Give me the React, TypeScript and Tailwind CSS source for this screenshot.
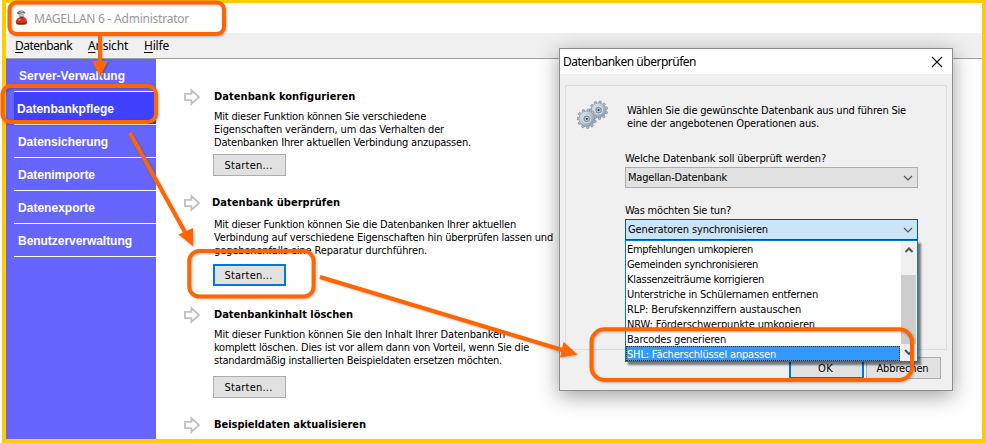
import { useLayoutEffect, useRef, useState } from "react";

const tahoma = "font-['DejaVu_Sans_Condensed','DejaVu_Sans',sans-serif] [font-stretch:condensed]";
const segoe = "font-['Noto_Sans',sans-serif]";

/** One line of text, tracked so that it fills the given width. */
function Line({ text, w, className = "", mnemonic = false }: { text: string; w: number; className?: string; mnemonic?: boolean }) {
  const ref = useRef<HTMLSpanElement>(null);
  const [spacing, setSpacing] = useState(0);
  useLayoutEffect(() => {
    if (ref.current) setSpacing((w - ref.current.getBoundingClientRect().width) / text.length);
  }, [w, text]);
  return (
    <span ref={ref} className={`block w-max whitespace-pre ${className}`} style={{ letterSpacing: `${spacing}px` }}>
      {mnemonic ? (
        <>
          <span className="underline underline-offset-2">{text[0]}</span>
          {text.slice(1)}
        </>
      ) : (
        text
      )}
    </span>
  );
}

const nav = [
  { text: "Server-Verwaltung", w: 106, pad: "pl-[5px]" },
  { text: "Datenbankpflege", w: 97, pad: "pl-[3px]", active: true },
  { text: "Datensicherung", w: 90, pad: "pl-1" },
  { text: "Datenimporte", w: 77, pad: "pl-1" },
  { text: "Datenexporte", w: 77, pad: "pl-1" },
  { text: "Benutzerverwaltung", w: 114, pad: "pl-1" },
];

type Section = {
  title: string;
  titleW: number;
  height: string;
  head: string;
  body: string;
  action: string;
  focused?: boolean;
  lines: [string, number][];
};

const sections: Section[] = [
  {
    title: "Datenbank konfigurieren",
    titleW: 142,
    height: "h-[106px]",
    head: "pl-px",
    body: "pt-[7px]",
    action: "pt-[5px]",
    lines: [
      ["Mit dieser Funktion können Sie verschiedene", 212],
      ["Eigenschaften verändern, um das Verhalten der", 230],
      ["Datenbanken Ihrer aktuellen Verbindung anzupassen.", 257],
    ],
  },
  {
    title: "Datenbank überprüfen",
    titleW: 128,
    height: "h-[112px]",
    head: "-ml-px",
    body: "pt-[9px]",
    action: "pt-[7px]",
    focused: true,
    lines: [
      ["Mit dieser Funktion können Sie die Datenbanken Ihrer aktuellen", 302],
      ["Verbindung auf verschiedene Eigenschaften hin überprüfen lassen und", 339],
      ["gegebenenfalls eine Reparatur durchführen.", 213],
    ],
  },
  {
    title: "Datenbankinhalt löschen",
    titleW: 140,
    height: "h-[110px]",
    head: "pl-px",
    body: "pt-[7px]",
    action: "pt-[9px]",
    lines: [
      ["Mit dieser Funktion können Sie den Inhalt Ihrer Datenbanken", 291],
      ["komplett löschen. Dies ist vor allem dann von Vorteil, wenn Sie die", 315],
      ["standardmäßig installierten Beispieldaten ersetzen möchten.", 288],
    ],
  },
  { title: "Beispieldaten aktualisieren", titleW: 153, height: "h-5", head: "pl-px", body: "pt-0", action: "pt-0", lines: [] },
];

const options: [string, number][] = [
  ["Empfehlungen umkopieren", 126],
  ["Gemeinden synchronisieren", 131],
  ["Klassenzeiträume korrigieren", 137],
  ["Unterstriche in Schülernamen entfernen", 191],
  ["RLP: Berufskennziffern austauschen", 174],
  ["NRW: Förderschwerpunkte umkopieren", 188],
  ["Barcodes generieren", 99],
  ["SHL: Fächerschlüssel anpassen", 149],
];

function ArrowIcon() {
  return (
    <svg width="17" height="18" viewBox="0 0 17 18" fill="none" stroke="#c0c0c0" strokeWidth="1.8">
      <path d="M1 5.9H7.4V2L15 9L7.4 16V12.1H1Z" />
    </svg>
  );
}

function Chevron({ up = false, bold = false }: { up?: boolean; bold?: boolean }) {
  return (
    <svg width="10" height="8" viewBox="0 0 10 8" fill="none" stroke="#555" strokeWidth={bold ? 2 : 1.2}>
      <path d={up ? "M1.5 6L5 2.5L8.5 6" : "M1 2L5 6L9 2"} />
    </svg>
  );
}

function Wizard() {
  return (
    <svg width="13" height="16" viewBox="0 0 13 16">
      <path d="M1 13Q.2 10.5 2.6 8.2L5 7L9.5 7.2Q12.4 9.5 12 13Q7 15.2 1 13Z" fill="#d8321a" />
      <path d="M1 12.6Q6 13.6 12 12.6L11.2 14.2Q6 15.2 1.6 14.2Z" fill="#951f13" />
      <path d="M3 9.4L6 8.6L5 11Z" fill="#ff9169" />
      <circle cx="6.5" cy="5.2" r="2.6" fill="#e0b49c" />
      <path d="M2 3.6Q2.4 .6 6.4 .4Q10 .8 10.4 3.8L7 2.8L3.4 4.4Z" fill="#536b98" />
      <path d="M4.4 2.4Q6 1.2 8.2 2" stroke="#c4cfe8" fill="none" />
      <path d="M4.6 6.8Q7 6 9 6.8L7.6 8.6H5.6Z" fill="#404057" />
    </svg>
  );
}

function Gear({ x, y, r }: { x: number; y: number; r: number }) {
  return (
    <g transform={`translate(${x} ${y})`}>
      {Array.from({ length: 11 }, (_, i) => (
        <rect key={i} x="-1.2" y={-r - 1.9} width="2.4" height="4" rx=".5" fill="#b7c4ce" stroke="#74838f" strokeWidth=".6" transform={`rotate(${(i * 360) / 11 + 10})`} />
      ))}
      <circle r={r} fill="url(#steel)" stroke="#7f8f9c" strokeWidth=".6" />
      <circle r="4" fill="#93a5b4" stroke="#dfe8ee" strokeWidth=".9" />
      <circle r="2.5" fill="#d3dee6" stroke="#5f7180" strokeWidth=".7" />
      <circle r="1.1" fill="#293744" />
    </g>
  );
}

function Gears() {
  return (
    <svg width="32" height="32" viewBox="0 0 32 32">
      <defs>
        <linearGradient id="steel" x1="0" y1="0" x2="1" y2="1">
          <stop offset="0" stopColor="#e6eef4" />
          <stop offset=".5" stopColor="#b4c2cf" />
          <stop offset="1" stopColor="#7890a6" />
        </linearGradient>
      </defs>
      <Gear x={21.6} y={10.2} r={7.3} />
      <Gear x={9.8} y={18.8} r={7.8} />
    </svg>
  );
}

function StartButton({ focused = false }: { focused?: boolean }) {
  return (
    <div className={`flex h-[22px] w-[73px] items-center justify-center bg-[#e1e1e1] pr-0.5 ${focused ? "border-2 border-[#0078d7]" : "border border-[#adadad]"}`}>
      <Line text="Starten..." w={48} />
    </div>
  );
}

function CheckDialog() {
  return (
    <div className="absolute top-12 left-[559px] flex h-[343px] w-[394px] flex-col border border-[#8c8c8c] bg-[#f0f0f0] shadow-[0_5px_20px_rgba(0,0,0,0.38)]">
      <div className="flex h-[25px] items-center justify-between bg-white pr-[9px] pl-[3px]">
        <Line text="Datenbanken überprüfen" w={133} className={`text-[12px] ${segoe}`} />
        <svg width="12" height="12" viewBox="0 0 12 12" stroke="#111" strokeWidth="1.1">
          <path d="M1 1L11 11M11 1L1 11" />
        </svg>
      </div>
      <div className="mx-[5px] mt-[11px] flex h-[265px] border border-[#dcdcdc] pl-[11px]">
        <div className="w-[48px] pt-[14px]">
          <Gears />
        </div>
        <div className="flex flex-col">
          <div className="pt-[18px] pl-[2px]">
            <Line text="Wählen Sie die gewünschte Datenbank aus und führen Sie" w={279} />
            <Line text="eine der angebotenen Operationen aus." w={192} />
          </div>
          <Line text="Welche Datenbank soll überprüft werden?" w={201} className="mt-[22px]" />
          <div className="mt-[2px] flex h-[21px] w-[293px] items-center justify-between border border-[#adadad] bg-[#e1e1e1] pr-1 pl-0.5">
            <Line text="Magellan-Datenbank" w={99} />
            <Chevron />
          </div>
          <Line text="Was möchten Sie tun?" w={106} className="mt-[16px]" />
          <div className="relative mt-[2px] flex h-[21px] w-[293px] items-center justify-between border border-[#005499] bg-[#cce4f7] pr-1 pl-0.5">
            <Line text="Generatoren synchronisieren" w={140} />
            <Chevron />
            <div className="absolute top-5 -left-px z-10 flex h-[122px] w-[293px] border border-[#0078d7] bg-white shadow-[3px_3px_2px_rgba(0,0,0,0.5)]">
              <div className="flex-1">
                {options.map(([text, w], i) => (
                  <div key={text} className={`flex h-[15px] items-end pl-px ${i === 7 ? "bg-[#3399ff] text-white outline-1 -outline-offset-1 outline-dotted outline-[#3c2a10]" : ""}`}>
                    <Line text={text} w={w} />
                  </div>
                ))}
              </div>
              <div className="mr-px ml-px flex w-[15px] flex-col items-center bg-[#f0f0f0]">
                <div className="flex h-[34px] items-start pt-[5px]">
                  <Chevron up bold />
                </div>
                <div className="h-[69px] w-full bg-[#cdcdcd]" />
                <div className="pt-1">
                  <Chevron bold />
                </div>
              </div>
            </div>
          </div>
        </div>
      </div>
      <div className="mt-[7px] flex gap-0.5 pl-[229px]">
        <div className="flex h-[22px] w-[75px] items-center justify-center border-2 border-[#0078d7] bg-[#e1e1e1] pr-0.5">
          <Line text="OK" w={15} />
        </div>
        <div className="flex h-[22px] w-[75px] items-center justify-center border border-[#adadad] bg-[#e1e1e1] pr-0.5">
          <Line text="Abbrechen" w={52} />
        </div>
      </div>
    </div>
  );
}

function Annotations() {
  return (
    <svg className="pointer-events-none absolute inset-0 z-20 drop-shadow-[1px_1px_1px_rgba(0,0,0,0.25)]" width="986" height="443" viewBox="0 0 986 443">
      <g fill="none" stroke="#ff6600" strokeWidth="4">
        <rect x="9.5" y="2.5" width="214.5" height="31.5" rx="7" />
        <rect x="2.5" y="86" width="153.5" height="36" rx="8" />
        <rect x="189.3" y="251" width="124.3" height="45.5" rx="10" />
        <rect x="591.5" y="329.3" width="320.5" height="50.7" rx="13" />
        <path d="M100 35V64M130 133L186 234M320 277L564 350.5" />
      </g>
      <g fill="#ff6600">
        <path d="M92 61H108L100 77Z" />
        <path d="M178.5 234.5L193 228L193.3 246.5Z" />
        <path d="M563.5 342L577.5 354.5L560 357.5Z" />
      </g>
    </svg>
  );
}

export default function App() {
  return (
    <div className={`relative h-[443px] w-[986px] overflow-hidden bg-white pl-0.5 text-[11px] leading-[13px] text-black ${tahoma}`}>
      <div className="flex h-full flex-col border-4 border-t-3 border-[#ffcc00]">
        <div className="flex h-[30px] items-center gap-[6px] bg-white pl-[9px]">
          <Wizard />
          <Line text="MAGELLAN 6 - Administrator" w={155} className={`text-[12px] text-[#999] ${segoe}`} />
        </div>
        <div className={`flex h-[26px] items-center gap-4 border-b border-[#a0a0a0] bg-[#f0f0f0] pl-[9px] text-[12px] ${segoe}`}>
          <Line text="Datenbank" w={57} mnemonic />
          <Line text="Ansicht" w={40} mnemonic />
          <Line text="Hilfe" w={25} mnemonic />
        </div>
        <div className="flex min-h-0 flex-1">
          <nav className="w-[150px] bg-[#6666ff] pl-2 font-['Liberation_Sans',Arial,sans-serif] text-[12px] font-bold text-white">
            {nav.map((n) => (
              <div key={n.text} className={`flex h-[33px] items-center border-b border-white pt-0.5 ${n.pad} ${n.active ? "bg-[#4040ff]" : ""}`}>
                <Line text={n.text} w={n.w} />
              </div>
            ))}
          </nav>
          <main className="flex-1 overflow-hidden pt-[29px] pl-[28px]">
            {sections.map((s) => (
              <section key={s.title} className={`flex ${s.height}`}>
                <div className="w-[29px]">
                  <ArrowIcon />
                </div>
                <div>
                  <Line text={s.title} w={s.titleW} className={`pt-0.5 font-bold ${s.head}`} />
                  {s.lines.length > 0 && (
                    <>
                      <div className={`pl-px ${s.body}`}>
                        {s.lines.map(([text, w]) => (
                          <Line key={text} text={text} w={w} />
                        ))}
                      </div>
                      <div className={s.action}>
                        <StartButton focused={s.focused} />
                      </div>
                    </>
                  )}
                </div>
              </section>
            ))}
          </main>
        </div>
      </div>
      <CheckDialog />
      <Annotations />
    </div>
  );
}
